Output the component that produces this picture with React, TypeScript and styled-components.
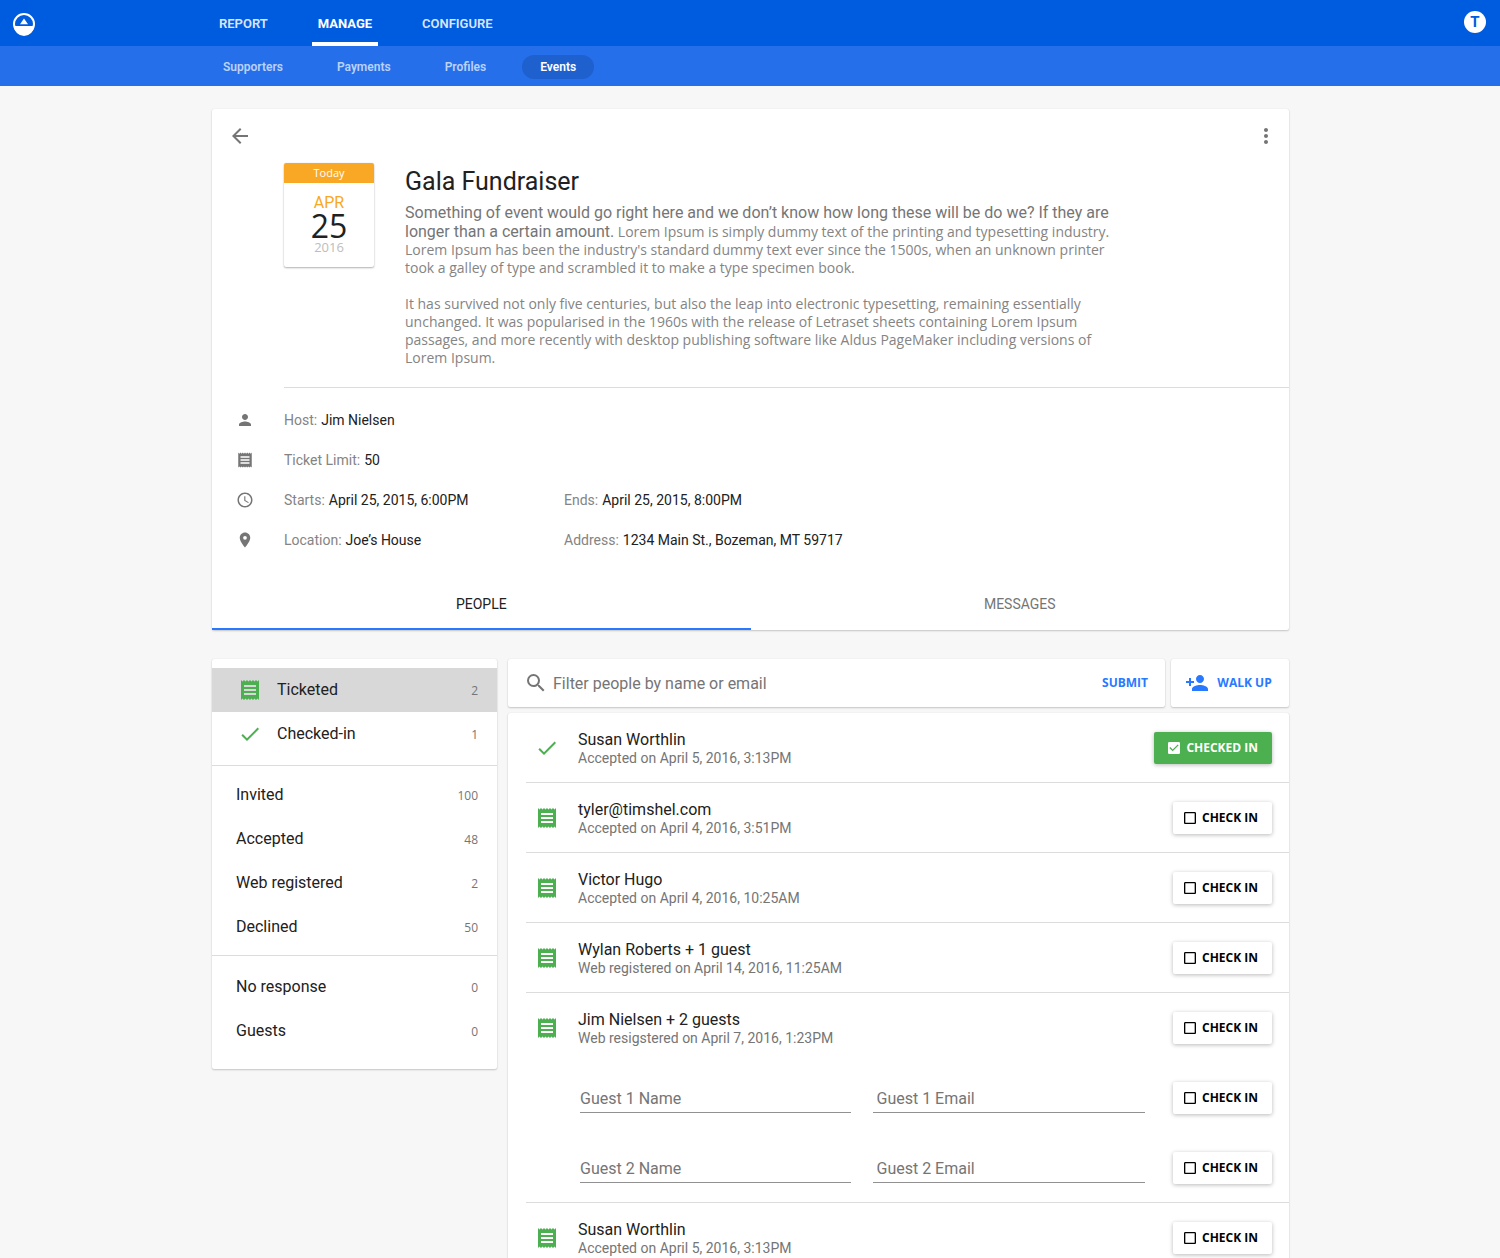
import React, { useId, useState } from "react";
import styled, { createGlobalStyle } from "styled-components";
import {
  MdArrowBack,
  MdMoreVert,
  MdPerson,
  MdReceipt,
  MdAccessTime,
  MdPlace,
  MdCheck,
  MdSearch,
  MdPersonAdd,
  MdCheckBox,
  MdCheckBoxOutlineBlank,
} from "react-icons/md";

const c = {
  page: "#f7f7f7",
  navy: "#005cde",
  subnav: "#256fea",
  pill: "#1f60cf",
  blue: "#2979ff",
  green: "#4caf50",
  amber: "#f9a825",
  text: "#212121",
  muted: "#757575",
  soft: "#848484",
  line: "#dcdcdc",
};

const ui = `Roboto, "Open Sans", sans-serif`;
const copy = `"Open Sans", "Noto Sans", sans-serif`;

const GlobalStyle = createGlobalStyle`
  *, *::before, *::after { box-sizing: border-box; }
  body { margin: 0; background: ${c.page}; color: ${c.text}; font: 400 16px/20px ${ui}; }
  button, input { font: inherit; color: inherit; }
  button { border: 0; background: none; padding: 0; cursor: pointer; }
  a { color: inherit; text-decoration: none; }
  h1, p, ul, dl, dd { margin: 0; padding: 0; }
  ul { list-style: none; }
  svg { display: block; flex: none; }
`;

const TopBar = styled.header`
  display: grid;
  grid-template-columns: minmax(48px, 1fr) minmax(0, 1078px) minmax(48px, 1fr);
  height: 46px;
  background: ${c.navy};
  color: #fff;
`;

const Home = styled.a`
  align-self: center;
  justify-self: start;
  padding: 2px 0 0 12px;
`;

const MainNav = styled.nav`
  display: flex;
  gap: 38px;
  padding-left: 2px;
`;

const MainLink = styled.a<{ $active?: boolean }>`
  display: flex;
  align-items: center;
  padding: 6px 6px 0;
  border-bottom: 4px solid ${(p) => (p.$active ? "#fff" : "transparent")};
  color: ${(p) => (p.$active ? "#fff" : "rgba(255, 255, 255, 0.87)")};
  font-size: 13px;
  font-weight: ${(p) => (p.$active ? 700 : 600)};
`;

const Avatar = styled.button`
  align-self: center;
  justify-self: end;
  width: 22px;
  height: 22px;
  margin: 0 14px 2px 0;
  border-radius: 50%;
  background: #fff;
  color: ${c.navy};
  font-size: 15px;
  font-weight: 700;
  line-height: 22px;
`;

const SubBar = styled.div`
  display: grid;
  grid-template-columns: minmax(0, 1078px);
  justify-content: center;
  height: 40px;
  background: ${c.subnav};
`;

const SubNav = styled.nav`
  display: flex;
  align-items: center;
  gap: 18px;
  margin-left: -6px;
  padding-top: 2px;
`;

const SubLink = styled.a<{ $active?: boolean }>`
  padding: 0 18px;
  border-radius: 12px;
  background: ${(p) => (p.$active ? c.pill : "transparent")};
  color: ${(p) => (p.$active ? "#fff" : "rgba(255, 255, 255, 0.7)")};
  font-size: 12px;
  font-weight: 600;
  line-height: 24px;
`;

const Page = styled.main`
  max-width: 1078px;
  margin: 23px auto 24px;
  padding-left: 1px;
`;

const Card = styled.section`
  border-radius: 2px;
  background: #fff;
  box-shadow: 0 1px 2px rgba(0, 0, 0, 0.2), 0 0 1px rgba(0, 0, 0, 0.12);
`;

const CardTools = styled.div`
  display: flex;
  justify-content: space-between;
  padding: 15px 11px 0 16px;
  color: ${c.muted};
`;

const Summary = styled.div`
  display: grid;
  grid-template-columns: 90px minmax(0, 720px);
  column-gap: 31px;
  align-items: start;
  margin-left: 72px;
  padding: 15px 0 20px;
  border-bottom: 1px solid ${c.line};
`;

const DateTile = styled.div`
  padding-bottom: 13px;
  border-radius: 2px;
  overflow: hidden;
  box-shadow: 0 1px 2px rgba(0, 0, 0, 0.3), 0 0 1px rgba(0, 0, 0, 0.12);
  text-align: center;
`;

const Today = styled.div`
  margin-bottom: 11px;
  background: ${c.amber};
  color: #fff;
  font: 400 11px/20px ${copy};
`;

const Month = styled.div`
  color: ${c.amber};
  font-size: 16px;
  line-height: 18px;
`;

const Day = styled.div`
  font: 400 32px/28px ${copy};
`;

const Year = styled.div`
  color: #bdbdbd;
  font: 400 13px/14px ${copy};
`;

const EventTitle = styled.h1`
  margin-bottom: 6px;
  padding-top: 4px;
  font-size: 25px;
  font-weight: 400;
  line-height: 30px;
`;

const Description = styled.p`
  color: ${c.soft};
  font: 400 14px/18px ${copy};

  & + & {
    margin-top: 18px;
  }
`;

const Lead = styled.span`
  color: ${c.muted};
  font: 400 16px/19px ${ui};
`;

const Details = styled.dl`
  display: grid;
  row-gap: 20px;
  padding: 22px 24px 28px;
`;

const DetailRow = styled.div`
  display: grid;
  grid-template-columns: 48px 280px minmax(0, 1fr);
  align-items: center;
  color: ${c.muted};
`;

const Detail = styled.div`
  display: flex;
  gap: 4px;
  font-size: 14px;

  dt {
    color: ${c.soft};
  }

  dd {
    color: ${c.text};
  }
`;

const Tabs = styled.div`
  display: grid;
  grid-template-columns: 1fr 1fr;
`;

const Tab = styled.button<{ $active?: boolean }>`
  height: 52px;
  padding-top: 2px;
  border-bottom: 2px solid ${(p) => (p.$active ? c.blue : "transparent")};
  color: ${(p) => (p.$active ? c.text : c.muted)};
  font-size: 14px;
`;

const Columns = styled.div`
  display: grid;
  grid-template-columns: 285px minmax(0, 1fr);
  column-gap: 11px;
  align-items: start;
  margin-top: 29px;
`;

const FilterGroup = styled.ul<{ $top: number; $bottom: number }>`
  padding: ${(p) => p.$top}px 0 ${(p) => p.$bottom}px;

  & + & {
    border-top: 1px solid ${c.line};
  }
`;

const FilterButton = styled.button<{ $selected?: boolean }>`
  display: flex;
  align-items: center;
  width: 100%;
  height: 44px;
  padding: 0 19px 0 24px;
  background: ${(p) => (p.$selected ? "#d8d8d8" : "transparent")};
  text-align: left;

  svg {
    width: 28px;
    margin-right: 13px;
    color: ${c.green};
  }
`;

const FilterText = styled.span`
  display: flex;
  flex: 1;
  justify-content: space-between;
  align-items: baseline;
`;

const Count = styled.span`
  color: ${c.muted};
  font: 400 12px/20px ${copy};
`;

const ActionBar = styled.div`
  display: grid;
  grid-template-columns: minmax(0, 1fr) 118px;
  gap: 6px;
  margin-bottom: 6px;
`;

const SearchForm = styled.form`
  display: flex;
  align-items: center;
  height: 48px;
  padding: 0 17px 0 16px;
  color: ${c.muted};
`;

const SearchInput = styled.input`
  flex: 1;
  min-width: 0;
  margin-left: 5px;
  padding: 2px 0 0;
  border: 0;
  outline: 0;
  background: none;

  &::placeholder {
    color: ${c.muted};
    opacity: 1;
  }
`;

const TextButton = styled.button`
  display: flex;
  align-items: center;
  justify-content: center;
  gap: 8px;
  color: ${c.blue};
  font: 700 12px/20px ${copy};
`;

const WalkUpButton = styled(TextButton)`
  padding-right: 3px;
`;

const PersonRow = styled.li<{ $flush?: boolean }>`
  display: flex;
  align-items: center;
  min-height: 70px;
  margin-left: 18px;
  padding: 1px 17px 0 9px;
  border-bottom: 1px solid ${(p) => (p.$flush ? "transparent" : c.line)};

  > svg {
    margin-right: 19px;
    color: ${c.green};
  }
`;

const PersonText = styled.div`
  flex: 1;
  padding-top: 1px;
`;

const PersonStatus = styled.div`
  color: ${c.muted};
  font-size: 14px;
  line-height: 17px;
`;

const GuestFields = styled.div`
  display: grid;
  flex: 1;
  grid-template-columns: 1fr 1fr;
  gap: 22px;
  margin: 0 28px 0 45px;
`;

const GuestInput = styled.input`
  min-width: 0;
  height: 30px;
  padding: 2px 0 0;
  border: 0;
  border-bottom: 1px solid #919191;
  outline: 0;
  background: none;

  &[type="email"] {
    padding-left: 3px;
  }

  &::placeholder {
    color: ${c.muted};
    opacity: 1;
  }
`;

const CheckLabel = styled.label<{ $checked: boolean }>`
  position: relative;
  display: flex;
  align-items: center;
  gap: 4px;
  height: 32px;
  padding: 0 14px 0 ${(p) => (p.$checked ? 12 : 9)}px;
  border-radius: 2px;
  background: ${(p) => (p.$checked ? c.green : "#fff")};
  box-shadow: 0 1px 4px rgba(0, 0, 0, 0.28);
  color: ${(p) => (p.$checked ? "#fff" : "#000")};
  font: 700 12px/20px ${copy};
  white-space: nowrap;
  cursor: pointer;
`;

const HiddenCheckbox = styled.input`
  position: absolute;
  inset: 0;
  width: 100%;
  height: 100%;
  margin: 0;
  opacity: 0;
  cursor: pointer;
`;

function Logo() {
  return (
    <svg width="24" height="24" viewBox="0 0 24 24" aria-hidden="true">
      <circle cx="12" cy="12" r="10" fill="none" stroke="#fff" strokeWidth="2" />
      <path d="M2 14h20a10 10 0 0 1-20 0z" fill="#fff" />
      <path d="M12 6.5l4 5.8H8z" fill="#fff" />
    </svg>
  );
}

function CheckInToggle({ initial = false, who }: { initial?: boolean; who: string }) {
  const [checked, setChecked] = useState(initial);
  const id = useId();
  return (
    <CheckLabel htmlFor={id} $checked={checked}>
      <HiddenCheckbox
        id={id}
        type="checkbox"
        title={who}
        checked={checked}
        onChange={(e) => setChecked(e.target.checked)}
      />
      {checked ? <MdCheckBox size={16} /> : <MdCheckBoxOutlineBlank size={16} />}
      {checked ? "CHECKED IN" : "CHECK IN"}
    </CheckLabel>
  );
}

type Person = { name: string; status: string; checkedIn?: boolean; guests?: number };

const people: Person[] = [
  { name: "Susan Worthlin", status: "Accepted on April 5, 2016, 3:13PM", checkedIn: true },
  { name: "tyler@timshel.com", status: "Accepted on April 4, 2016, 3:51PM" },
  { name: "Victor Hugo", status: "Accepted on April 4, 2016, 10:25AM" },
  { name: "Wylan Roberts + 1 guest", status: "Web registered on April 14, 2016, 11:25AM" },
  { name: "Jim Nielsen + 2 guests", status: "Web resigstered on April 7, 2016, 1:23PM", guests: 2 },
  { name: "Susan Worthlin", status: "Accepted on April 5, 2016, 3:13PM" },
];

const filterGroups = [
  {
    top: 9,
    bottom: 9,
    items: [
      { label: "Ticketed", count: 2, icon: MdReceipt },
      { label: "Checked-in", count: 1, icon: MdCheck },
    ],
  },
  {
    top: 7,
    bottom: 6,
    items: [
      { label: "Invited", count: 100 },
      { label: "Accepted", count: 48 },
      { label: "Web registered", count: 2 },
      { label: "Declined", count: 50 },
    ],
  },
  {
    top: 9,
    bottom: 16,
    items: [
      { label: "No response", count: 0 },
      { label: "Guests", count: 0 },
    ],
  },
];

function PersonItem({ person }: { person: Person }) {
  const guests = Array.from({ length: person.guests ?? 0 }, (_, i) => i + 1);
  return (
    <>
      <PersonRow $flush={guests.length > 0}>
        {person.checkedIn ? <MdCheck size={24} /> : <MdReceipt size={24} />}
        <PersonText>
          <div>{person.name}</div>
          <PersonStatus>{person.status}</PersonStatus>
        </PersonText>
        <CheckInToggle initial={person.checkedIn} who={person.name} />
      </PersonRow>
      {guests.map((n) => (
        <PersonRow key={n} $flush={n < guests.length}>
          <GuestFields>
            <GuestInput aria-label={`Guest ${n} Name`} placeholder={`Guest ${n} Name`} />
            <GuestInput type="email" aria-label={`Guest ${n} Email`} placeholder={`Guest ${n} Email`} />
          </GuestFields>
          <CheckInToggle who={`Guest ${n}`} />
        </PersonRow>
      ))}
    </>
  );
}

export default function App() {
  const [filter, setFilter] = useState("Ticketed");
  const [tab, setTab] = useState("PEOPLE");

  return (
    <>
      <GlobalStyle />
      <TopBar>
        <Home href="#home" aria-label="Home">
          <Logo />
        </Home>
        <MainNav>
          <MainLink href="#report">REPORT</MainLink>
          <MainLink href="#manage" $active>
            MANAGE
          </MainLink>
          <MainLink href="#configure">CONFIGURE</MainLink>
        </MainNav>
        <Avatar type="button">T</Avatar>
      </TopBar>
      <SubBar>
        <SubNav>
          <SubLink href="#supporters">Supporters</SubLink>
          <SubLink href="#payments">Payments</SubLink>
          <SubLink href="#profiles">Profiles</SubLink>
          <SubLink href="#events" $active>
            Events
          </SubLink>
        </SubNav>
      </SubBar>

      <Page>
        <Card>
          <CardTools>
            <button type="button" aria-label="Back">
              <MdArrowBack size={24} />
            </button>
            <button type="button" aria-label="More options">
              <MdMoreVert size={24} />
            </button>
          </CardTools>
          <Summary>
            <DateTile>
              <Today>Today</Today>
              <Month>APR</Month>
              <Day>25</Day>
              <Year>2016</Year>
            </DateTile>
            <div>
              <EventTitle>Gala Fundraiser</EventTitle>
              <Description>
                <Lead>
                  Something of event would go right here and we don’t know how long these will be do
                  we? If they are longer than a certain amount.
                </Lead>{" "}
                Lorem Ipsum is simply dummy text of the printing and typesetting industry. Lorem
                Ipsum has been the industry's standard dummy text ever since the 1500s, when an
                unknown printer took a galley of type and scrambled it to make a type specimen book.
              </Description>
              <Description>
                It has survived not only five centuries, but also the leap into electronic
                typesetting, remaining essentially unchanged. It was popularised in the 1960s with
                the release of Letraset sheets containing Lorem Ipsum passages, and more recently
                with desktop publishing software like Aldus PageMaker including versions of Lorem
                Ipsum.
              </Description>
            </div>
          </Summary>
          <Details>
            <DetailRow>
              <MdPerson size={18} />
              <Detail>
                <dt>Host:</dt>
                <dd>Jim Nielsen</dd>
              </Detail>
            </DetailRow>
            <DetailRow>
              <MdReceipt size={18} />
              <Detail>
                <dt>Ticket Limit:</dt>
                <dd>50</dd>
              </Detail>
            </DetailRow>
            <DetailRow>
              <MdAccessTime size={18} />
              <Detail>
                <dt>Starts:</dt>
                <dd>April 25, 2015, 6:00PM</dd>
              </Detail>
              <Detail>
                <dt>Ends:</dt>
                <dd>April 25, 2015, 8:00PM</dd>
              </Detail>
            </DetailRow>
            <DetailRow>
              <MdPlace size={18} />
              <Detail>
                <dt>Location:</dt>
                <dd>Joe’s House</dd>
              </Detail>
              <Detail>
                <dt>Address:</dt>
                <dd>1234 Main St., Bozeman, MT 59717</dd>
              </Detail>
            </DetailRow>
          </Details>
          <Tabs role="tablist">
            {["PEOPLE", "MESSAGES"].map((name) => (
              <Tab
                key={name}
                type="button"
                role="tab"
                aria-selected={tab === name}
                $active={tab === name}
                onClick={() => setTab(name)}
              >
                {name}
              </Tab>
            ))}
          </Tabs>
        </Card>

        <Columns>
          <Card as="nav">
            {filterGroups.map((group) => (
              <FilterGroup key={group.items[0].label} $top={group.top} $bottom={group.bottom}>
                {group.items.map(({ label, count, icon: Icon }: any) => (
                  <li key={label}>
                    <FilterButton
                      type="button"
                      $selected={filter === label}
                      onClick={() => setFilter(label)}
                    >
                      {Icon && <Icon size={24} />}
                      <FilterText>
                        {label}
                        <Count>{count}</Count>
                      </FilterText>
                    </FilterButton>
                  </li>
                ))}
              </FilterGroup>
            ))}
          </Card>

          <div>
            <ActionBar>
              <Card as={SearchForm} onSubmit={(e: React.FormEvent) => e.preventDefault()}>
                <MdSearch size={24} />
                <SearchInput
                  type="text"
                  aria-label="Filter people by name or email"
                  placeholder="Filter people by name or email"
                />
                <TextButton type="submit">SUBMIT</TextButton>
              </Card>
              <Card as={WalkUpButton} type="button">
                <MdPersonAdd size={24} />
                WALK UP
              </Card>
            </ActionBar>
            <Card>
              <ul>
                {people.map((person, i) => (
                  <PersonItem key={i} person={person} />
                ))}
              </ul>
            </Card>
          </div>
        </Columns>
      </Page>
    </>
  );
}
